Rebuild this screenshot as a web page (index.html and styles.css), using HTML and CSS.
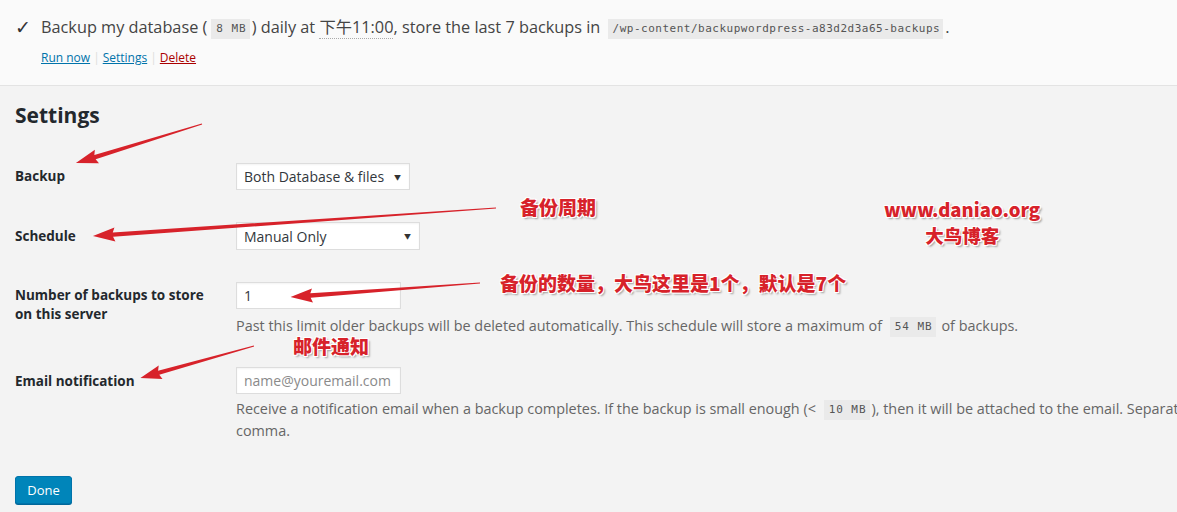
FILE: index.html
```html
<!DOCTYPE html>
<html>
<head>
<meta charset="utf-8">
<link rel="stylesheet" href="styles.css">
</head>
<body>
<div class="page">
  <div class="top">
    <p class="summary"><span class="check">✓</span><span>Backup my database (<code>8 MB</code>) daily at <abbr>下午11:00</abbr>, store the last 7 backups in <code class="path">/wp-content/backupwordpress-a83d2d3a65-backups</code>.</span></p>
    <p class="actions"><a class="lnk">Run now</a><span class="sep">|</span><a class="lnk">Settings</a><span class="sep">|</span><a class="lnk del">Delete</a></p>
  </div>
  <div class="settings">
    <h3 class="title">Settings</h3>
    <div class="row r1">
      <div class="label">Backup</div>
      <div class="field"><div class="select s1"><span>Both Database &amp; files</span><span class="caret">▼</span></div></div>
    </div>
    <div class="row r2">
      <div class="label">Schedule</div>
      <div class="field"><div class="select s2"><span>Manual Only</span><span class="caret">▼</span></div></div>
    </div>
    <div class="row r3">
      <div class="label">Number of backups to store on this server</div>
      <div class="field">
        <div class="input">1</div>
        <p class="desc">Past this limit older backups will be deleted automatically. This schedule will store a maximum of <code>54 MB</code> of backups.</p>
      </div>
    </div>
    <div class="row r4">
      <div class="label">Email notification</div>
      <div class="field">
        <div class="input ph">name@youremail.com</div>
        <p class="desc wide">Receive a notification email when a backup completes. If the backup is small enough (&lt; <code>10 MB</code>), then it will be attached to the email. Separate multiple email addresses with a comma.</p>
      </div>
    </div>
    <button class="done">Done</button>
  </div>

  <svg class="arrows" width="1177" height="512" viewBox="0 0 1177 512">
    <g fill="#d7222a">
      <path transform="translate(202,124) rotate(162.8)" d="M0,-0.6 L112,-2.2 L110,-7 L132,0 L110,7 L112,2.2 L0,0.6 Z"/>
      <path transform="translate(496,208) rotate(176.03)" d="M0,-0.6 L384,-2.2 L382,-7 L404,0 L382,7 L384,2.2 L0,0.6 Z"/>
      <path transform="translate(480,283) rotate(175.76)" d="M0,-0.6 L170,-2.2 L168,-7 L190,0 L168,7 L170,2.2 L0,0.6 Z"/>
      <path transform="translate(254,346) rotate(164.32)" d="M0,-0.6 L99,-2.2 L97,-7 L118,0 L97,7 L99,2.2 L0,0.6 Z"/>
    </g>
  </svg>
  <span class="note n1">备份周期</span>
  <span class="note n2">www.daniao.org<br>大鸟博客</span>
  <span class="note n3">备份的数量，大鸟这里是1个，默认是7个</span>
  <span class="note n4">邮件通知</span>
</div>
</body>
</html>
```
FILE: styles.css
```css
html, body {
  margin: 0;
  padding: 0;
  overflow: hidden;
}
body {
  width: 1177px;
  height: 512px;
  background: #f3f3f3;
  font-family: "Open Sans", "Noto Sans CJK SC", sans-serif;
  color: #444;
}
.page {
  position: relative;
  width: 1177px;
  height: 512px;
  overflow: hidden;
}
.top {
  background: #fafafa;
  border-bottom: 1px solid #e3e3e3;
  height: 86px;
  box-sizing: border-box;
  padding: 14px 0 0 15px;
}
.summary {
  margin: 0;
  display: flex;
  align-items: center;
  font-size: 16.3px;
  line-height: 26px;
  color: #444;
  white-space: nowrap;
}
.check {
  width: 26px;
  font-family: "DejaVu Sans", sans-serif;
  font-size: 19px;
  color: #333;
}
code {
  display: inline-block;
  font-family: "DejaVu Sans Mono", monospace;
  font-size: 11px;
  letter-spacing: 0.95px;
  line-height: 20px;
  vertical-align: middle;
  background: #eaeaea;
  color: #555;
  padding: 0 3px 0 5px;
  margin: 0 2px 0 4px;
}
code.path {
  letter-spacing: 0.5px;
  margin-left: 3px;
}
abbr {
  text-decoration: none;
  border-bottom: 1px dotted #aaa;
}
.actions {
  margin: 9px 0 0 26px;
  font-size: 12px;
  line-height: 18px;
  display: flex;
  gap: 3px;
}
.lnk {
  color: #0073aa;
  text-decoration: underline;
}
.lnk.del { color: #a00; }
.sep { color: #ddd; }
.settings {
  padding: 15px 15px 0 15px;
}
.title {
  margin: 0;
  font-size: 21px;
  line-height: 28px;
  font-weight: 700;
  color: #23282d;
}
.row {
  display: grid;
  grid-template-columns: 221px 1fr;
  font-size: 14px;
}
.label {
  font-weight: 700;
  color: #23282d;
  font-size: 13.5px;
  line-height: 19px;
}
.r1 { margin-top: 34px; align-items: center; }
.r2 { margin-top: 32px; align-items: center; }
.r3 { margin-top: 32px; }
.r4 { margin-top: 30px; }
.r3 .label { padding-top: 4px; width: 205px; }
.r4 .label { padding-top: 5px; }
.select, .input {
  box-sizing: border-box;
  height: 27px;
  background: #fff;
  border: 1px solid #ddd;
  box-shadow: inset 0 1px 2px rgba(0,0,0,.05);
  display: flex;
  align-items: center;
  padding: 0 7px;
  font-size: 14px;
  color: #32373c;
}
.select { justify-content: space-between; }
.s1 { width: 174px; }
.s2 { width: 184px; height: 28px; }
.caret { font-size: 7px; color: #333; padding-right: 1px; }
.input { width: 165px; }
.input.ph { color: #8a8a8a; }
.desc {
  margin: 6px 0 0 0;
  font-size: 14.4px;
  line-height: 22px;
  color: #666;
  white-space: nowrap;
}
.desc.wide {
  margin-top: 4px;
  white-space: normal;
  width: 1180px;
}
.done {
  margin-top: 34px;
  width: 57px;
  height: 28px;
  background: #0085ba;
  border: 1px solid #0073aa;
  border-radius: 3px;
  color: #fff;
  font-family: "Open Sans", sans-serif;
  font-size: 13px;
  padding: 0;
  box-shadow: 0 1px 0 #006799;
}
.arrows {
  position: absolute;
  left: 0;
  top: 0;
  pointer-events: none;
}
.note {
  position: absolute;
  font-family: "Noto Sans CJK SC", sans-serif;
  font-weight: 900;
  font-size: 19px;
  line-height: 26px;
  color: #d7222a;
  white-space: nowrap;
  text-shadow: 1px 1px 0 #fff, -1px -1px 0 #fff, 1px -1px 0 #fff, -1px 1px 0 #fff, 2px 2px 2px rgba(0,0,0,.35);
}
.n1 { left: 520px; top: 194px; }
.n2 { left: 884px; top: 196px; text-align: center; line-height: 26px; font-size: 18.5px; }
.n3 { left: 500px; top: 270px; }
.n4 { left: 293px; top: 333px; }
```
